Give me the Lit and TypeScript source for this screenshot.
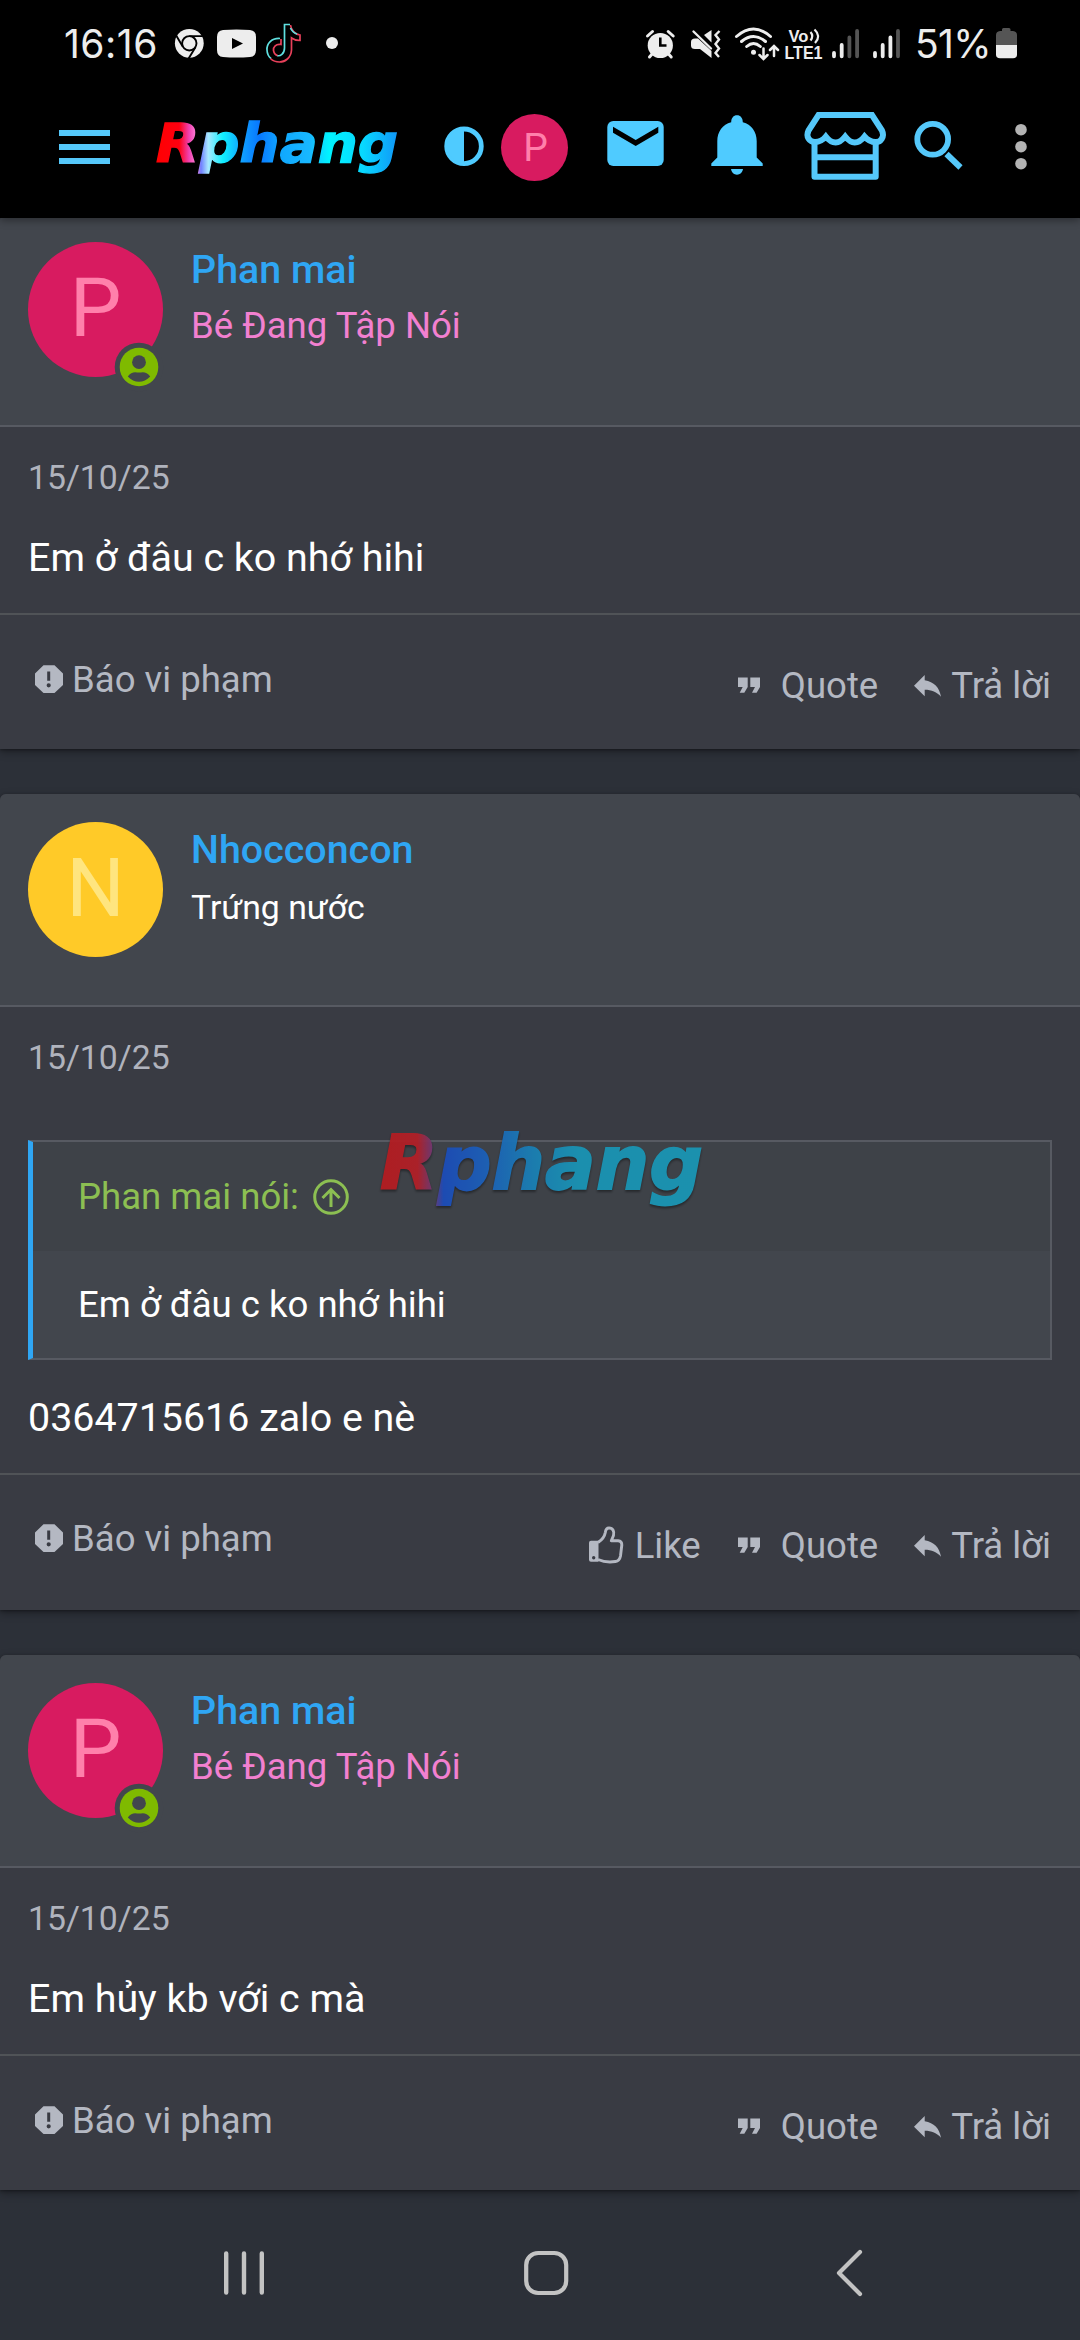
import { LitElement, html, svg, css, nothing } from "lit";
import { customElement, property } from "lit/decorators.js";

interface Post {
  name: string;
  initial: string;
  tone: "pink" | "amber";
  title: string;
  titleTone: "rose" | "plain";
  online: boolean;
  date: string;
  quote?: { author: string; text: string };
  text: string;
  likable: boolean;
}

const POSTS: Post[] = [
  { name: "Phan mai", initial: "P", tone: "pink", title: "Bé Đang Tập Nói", titleTone: "rose", online: true, date: "15/10/25", text: "Em ở đâu c ko nhớ hihi", likable: false },
  { name: "Nhocconcon", initial: "N", tone: "amber", title: "Trứng nước", titleTone: "plain", online: false, date: "15/10/25", quote: { author: "Phan mai nói:", text: "Em ở đâu c ko nhớ hihi" }, text: "0364715616 zalo e nè", likable: true },
  { name: "Phan mai", initial: "P", tone: "pink", title: "Bé Đang Tập Nói", titleTone: "rose", online: true, date: "15/10/25", text: "Em hủy kb với c mà", likable: false },
];

@customElement("status-bar")
class StatusBar extends LitElement {
  static styles = css`
    :host { display: flex; height: 88px; color: #ededed; background: #000; }
    svg { display: block; flex: none; }
    .time, .pct { font-family: Inter, "Noto Sans", sans-serif; font-size: 39px; line-height: 88px; white-space: nowrap; }
    .time { width: 110px; padding-left: 64px; letter-spacing: 0.5px; }
    .pct { width: 76px; letter-spacing: -0.6px; }
    .space { flex: 1; }
    .net { font-family: "Liberation Sans", sans-serif; font-weight: 700; fill: #ededed; }
  `;
  render() {
    // Every glyph's viewBox keeps the bar's own coordinates, so the tiles sit edge to edge.
    return html`
      <span class="time">16:16</span>
      <svg width="36" height="88" viewBox="174 0 36 88">
        <circle cx="189.3" cy="43.3" r="14.4" fill="#ededed"/>
        <g fill="none" stroke="#000" stroke-width="1.9">
          <circle cx="189.3" cy="43.3" r="7.2"/>
          <path d="M189.3 36.1H202.5M183 46.9L176.2 35.6M195.6 46.9L188.6 58.5"/>
        </g>
      </svg>
      <svg width="54" height="88" viewBox="210 0 54 88">
        <path fill="#ededed" d="M223 30Q236.500 29 250 30Q256 30.500 256 37V50Q256 56.500 250 57Q236.500 58 223 57Q217 56.500 217 50V37Q217 30.500 223 30Z"/>
        <path fill="#000" d="M232 38L243 43.500L232 49Z"/>
      </svg>
      <svg width="50" height="88" viewBox="264 0 50 88">
        <g fill="none" stroke-width="1.7">
          <path stroke="#5fe0e0" d="M284.500 48V24.500H290M284.500 48C284.500 54 280 56.500 277 55.500M280 38.500C271 38 266.500 44 267 50C267.200 54 269 57 271 58.500"/>
          <path stroke="#e8405a" d="M290.500 25C291 30 295 34.500 300 35V40.500C296.500 40.500 293.500 39.500 291.500 38V50C291 58 285 62 279.500 62C276 62 273 61 270.500 58.500M281 39V44.500C276 43.500 273 47 273.500 50.500C274 53 275.500 55 277.500 55.500"/>
          <path stroke="#5fe0e0" d="M290.500 28C292 31.500 294 33 297 34"/>
        </g>
      </svg>
      <svg width="40" height="88" viewBox="314 0 40 88"><circle cx="332" cy="43" r="6" fill="#ededed"/></svg>
      <span class="space"></span>
      <svg width="44" height="88" viewBox="640 0 44 88">
        <circle cx="660.3" cy="45.500" r="12.600" fill="#ededed"/>
        <path d="M647.500 36L652.500 31.500M673.200 36L668.200 31.500M649.500 57L653 53M671.200 57L667.700 53" stroke="#ededed" stroke-width="3" stroke-linecap="round"/>
        <path d="M660.3 37.500V45.500H666.500" fill="none" stroke="#000" stroke-width="2.600"/>
      </svg>
      <svg width="46" height="88" viewBox="684 0 46 88">
        <path fill="#ededed" d="M695 38.500H698L711.500 51V58L700 49H695Q691 49 691 45.500V42Q691 38.500 695 38.500ZM704 35L711.500 30V42.500Z"/>
        <path d="M693.500 31.500L711 48.500" stroke="#ededed" stroke-width="2.400" stroke-linecap="round"/>
        <path d="M719.500 31L715.500 35L719 39.500L715.500 44L719 48.500L715.500 53L719 57" fill="none" stroke="#ededed" stroke-width="2.400"/>
      </svg>
      <svg width="54" height="88" viewBox="730 0 54 88">
        <g fill="none" stroke="#ededed" stroke-width="3" stroke-linecap="round">
          <path d="M736.500 36.500Q753.500 21.500 770.500 36.500M741.500 41.500Q753.500 31.500 765.500 41.500M746.700 46.500Q753.500 40.500 760.300 46.500"/>
          <path d="M763.500 48.500V58.500M759.500 55L763.500 59L767.500 55M774 56V46.500M770 50L774 46L778 50" stroke-width="2.500"/>
        </g>
        <circle cx="753.500" cy="52.300" r="2.500" fill="#ededed"/>
      </svg>
      <svg width="44" height="88" viewBox="784 0 44 88">
        <text class="net" x="788.500" y="41.500" font-size="16" textLength="20" lengthAdjust="spacingAndGlyphs">Vo</text>
        <path d="M810.500 32Q814 36 810.500 40.500M814.500 29.500Q821.500 36 815 43" fill="none" stroke="#ededed" stroke-width="2.200"/>
        <text class="net" x="784.500" y="59" font-size="17.500" textLength="38" lengthAdjust="spacingAndGlyphs">LTE1</text>
      </svg>
      <svg width="87" height="88" viewBox="828 0 87 88">
        <g stroke="#ededed" stroke-width="3.800" stroke-linecap="round">
          <path d="M834 53V56.300M841.700 45V56.300M875 53V56.300M882.700 45V56.300M890.400 37.500V56.300"/>
          <path stroke="#555" d="M849.400 37.500V56.300M857.100 31V56.300M898 31V56.300"/>
        </g>
      </svg>
      <span class="pct">51%</span>
      <svg width="89" height="88" viewBox="991 0 89 88">
        <path fill="#555" d="M1002 29.500Q1002 28 1003.500 28H1009Q1010.500 28 1010.500 29.500V31H1013Q1017 31.500 1017 35V46H996V35Q996 31.500 1000 31H1002Z"/>
        <path fill="#ededed" d="M996 45H1017V54.500Q1017 58.300 1013 58.300H1000Q996 58.300 996 54.500Z"/>
      </svg>`;
  }
}

@customElement("app-bar")
class AppBar extends LitElement {
  static styles = css`
    :host { display: flex; height: 130px; background: #000; }
    svg { display: block; flex: none; }
    .brand { font-family: "DejaVu Sans", sans-serif; font-weight: 700; font-style: italic; font-size: 54px; }
    .initial { font-family: Roboto, sans-serif; font-size: 39px; fill: #ff80ab; text-anchor: middle; }
  `;
  render() {
    return html`
      <svg width="140" height="130" viewBox="0 88 140 130"><path fill="#55c8fa" d="M59 130h51v6h-51zM59 144h51v6h-51zM59 158h51v6h-51z"/></svg>
      <svg width="290" height="130" viewBox="140 88 290 130">
        <defs>
          <linearGradient id="brand" gradientUnits="userSpaceOnUse" x1="155" y1="0" x2="397" y2="0">
            <stop offset="0" stop-color="#f00"/><stop offset=".1" stop-color="#ff0010"/><stop offset=".14" stop-color="#f040b0"/>
            <stop offset=".17" stop-color="#ff80d8"/><stop offset=".19" stop-color="#7080ff"/><stop offset=".22" stop-color="#a8e8ff"/><stop offset=".28" stop-color="#10f0ff"/>
            <stop offset=".36" stop-color="#10a0ff"/><stop offset=".43" stop-color="#0878ff"/><stop offset=".52" stop-color="#10a8ff"/>
            <stop offset=".64" stop-color="#18b8ff"/><stop offset=".72" stop-color="#00f4ff"/><stop offset=".86" stop-color="#08d8ff"/><stop offset="1" stop-color="#1098f8"/>
          </linearGradient>
        </defs>
        <text class="brand" x="156" y="162" fill="url(#brand)" stroke="url(#brand)" stroke-width="1.400" textLength="242" lengthAdjust="spacingAndGlyphs">Rphang</text>
      </svg>
      <svg width="65" height="130" viewBox="430 88 65 130">
        <circle cx="464" cy="146.300" r="17.300" fill="none" stroke="#4fcbff" stroke-width="4.800"/>
        <path fill="#4fcbff" d="M464 129.500V163A16.700 16.700 0 0 1 464 129.500Z"/>
      </svg>
      <svg width="95" height="130" viewBox="495 88 95 130">
        <circle cx="534.500" cy="147.500" r="33.500" fill="#d81b60"/>
        <text class="initial" x="535.500" y="161">P</text>
      </svg>
      <svg width="100" height="130" viewBox="590 88 100 130">
        <rect x="607.300" y="121" width="56.400" height="45" rx="6" fill="#4fcbff"/>
        <path fill="#000" d="M613 126.700L635.700 140L658.300 126.700V132.700L635.700 146L613 132.700Z"/>
      </svg>
      <svg width="100" height="130" viewBox="690 88 100 130">
        <path fill="#4fcbff" d="M737 115.300C740.500 115.300 742.800 118 742.800 122.300C751.500 124.500 756.700 132 756.700 141V157.500L762.700 163.500V166H711.300V163.500L717.300 157.500V141C717.300 132 722.500 124.500 731.200 122.300C731.200 118 733.500 115.300 737 115.300ZM731 169H743C742.500 172.500 740 174.700 737 174.700C734 174.700 731.500 172.500 731 169Z"/>
      </svg>
      <svg width="110" height="130" viewBox="790 88 110 130">
        <g fill="none" stroke="#55c8fa" stroke-width="6" stroke-linejoin="round">
          <path d="M818.500 115H872L882 130.500C885 137 880.500 142.300 875.500 142C871 142 867.500 140 864.500 136.500C861.500 140.500 858 142.500 854.700 142.500C851 142.500 848 140 845.200 136.500C842 140.500 839 142.500 835.700 142.500C832 142.500 828.500 140 825.800 136.500C823 140 819.500 142 815 142C809.500 142 805.500 137 808.500 130.500Z" stroke-linejoin="miter"/>
          <path d="M814.500 142V176.700H875.700V142M814.500 157.300H875.700"/>
        </g>
      </svg>
      <svg width="80" height="130" viewBox="900 88 80 130">
        <circle cx="932.700" cy="139.300" r="15.400" fill="none" stroke="#55c8fa" stroke-width="5.800"/>
        <path d="M946.500 154L960.500 167.500" stroke="#55c8fa" stroke-width="6"/>
      </svg>
      <svg width="100" height="130" viewBox="980 88 100 130">
        <g fill="#b3b3b3"><circle cx="1021" cy="129.700" r="5.800"/><circle cx="1021" cy="146.700" r="5.800"/><circle cx="1021" cy="163.700" r="5.800"/></g>
      </svg>`;
  }
}

const reportIcon = svg`<path fill="currentColor" fill-rule="evenodd" d="M8.500 12.300H19.500L28 20.500V32L19.500 40H8.500L0 32V20.500ZM12.200 18.500V27.800H15.200V18.500ZM13.700 30.200A2.100 2.100 0 1 0 13.700 34.400A2.100 2.100 0 1 0 13.700 30.200Z"/>`;
const quoteIcon = svg`<path fill="currentColor" d="M0 18.500H9.700V28L6.300 33.800H1.700L4.700 28H0ZM12.300 18.500H22V28L18.600 33.800H14L17 28H12.300Z"/>`;
const replyIcon = svg`<path fill="currentColor" d="M0 26.800L10.700 16V21.300C20 22.800 25.500 28.500 27 37.800C23 33 17.500 30.800 10.700 30.800V37.300Z"/>`;
const likeIcon = svg`<path fill="currentColor" fill-rule="evenodd" d="M2 21.800H9.500V42.800H2Q0 42.800 0 40.800V23.800Q0 21.800 2 21.800ZM4.700 37A1.700 1.700 0 1 0 4.700 40.400A1.700 1.700 0 1 0 4.700 37Z"/>
  <path fill="none" stroke="currentColor" stroke-width="2.900" stroke-linejoin="round" d="M9 23.500C13 21 15.500 18 16.300 13.500C16.800 9.500 18.500 9 20 9C24 9 25.500 12.500 24.500 16.500L22.300 21.700H29Q33 22 32.800 26L31.500 37Q30.500 42 26.500 42.500Q17 44 9 40.500"/>`;

@customElement("forum-post")
class ForumPost extends LitElement {
  @property({ attribute: false }) post!: Post;

  static styles = css`
    :host { display: block; border-radius: 6px 6px 0 0; background: #393b43; box-shadow: 0 3px 8px rgba(0, 0, 0, 0.35), 0 1px 3px rgba(0, 0, 0, 0.3); }
    svg { display: block; flex: none; }
    .head { box-sizing: border-box; height: 213px; padding: 28px; display: flex; gap: 28px; background: #42464d; border-bottom: 2px solid #575a62; border-radius: 6px 6px 0 0; }
    .avatar { position: relative; width: 135px; height: 135px; border-radius: 50%; font-size: 82px; line-height: 133px; text-align: center; }
    .pink { background: #d81b60; color: #ff80ab; }
    .amber { background: #ffca28; color: #ffe57f; }
    .badge { position: absolute; right: -1px; bottom: -15px; }
    .who { display: flex; flex-direction: column; }
    .name { color: #2fa6f4; font-size: 39.400px; font-weight: 500; line-height: 56px; }
    .rose { color: #f280d0; font-size: 36.560px; line-height: 56px; }
    .plain { color: #fff; font-size: 33.750px; line-height: 60px; }
    .body { padding: 28px 28px 27px; }
    .date { color: #b0b3bd; font-size: 33.750px; line-height: 45px; }
    .text { margin-top: 30px; color: #fff; font-size: 39.400px; line-height: 56px; }
    .quote { margin: 60px 0 30px; border: 2px solid #575a62; border-left: 5px solid #2fa6f4; background: #42464d; }
    .quote + .text { margin-top: 0; }
    .qhead { position: relative; display: flex; align-items: center; gap: 14px; height: 109px; padding-left: 45px; background: #3e4248; color: #8cbf52; font-size: 36.560px; }
    .qtext { padding-left: 45px; color: #fff; font-size: 36.560px; line-height: 107px; }
    .watermark { position: absolute; left: 337px; top: -22px; opacity: 0.95; filter: drop-shadow(0 2px 1px rgba(0, 0, 0, 0.4)); }
    .brand { font-family: "DejaVu Sans", sans-serif; font-weight: 700; font-style: italic; font-size: 75px; }
    .foot { box-sizing: border-box; height: 136px; padding: 38px 29px 0 35px; display: flex; justify-content: space-between; border-top: 2px solid #505357; color: #b4b8c2; font-size: 36.560px; line-height: 54px; }
    .tall { height: 137px; padding-top: 37px; }
    .report { display: flex; gap: 9px; }
    .actions { display: flex; padding-top: 6px; }
    .tall .actions { padding-top: 7px; }
    .action { display: flex; }
    .like { gap: 11px; margin-right: 37px; }
    .quoting { gap: 21px; margin-right: 36px; }
    .reply { gap: 10px; }
  `;

  render() {
    const p = this.post;
    return html`
      <div class="head">
        <div class="avatar ${p.tone}">${p.initial}
          ${p.online ? html`<svg class="badge" width="50" height="50" viewBox="-25 -25 50 50">
            <circle r="24.300" fill="#42464d"/><circle r="19.300" fill="#7fba00"/>
            <circle cy="-4.800" r="6.900" fill="#42464d"/>
            <path fill="#42464d" d="M-11.200 9.500C-8 4.500 -4 4.800 0 5.600C4 4.800 8 4.500 11.200 9.500C8 13 4 14.800 0 14.800C-4 14.800 -8 13 -11.200 9.500Z"/>
          </svg>` : nothing}
        </div>
        <div class="who"><span class="name">${p.name}</span><span class=${p.titleTone}>${p.title}</span></div>
      </div>
      <div class="body">
        <div class="date">${p.date}</div>
        ${p.quote ? html`<div class="quote">
          <div class="qhead">
            <span>${p.quote.author}</span>
            <svg width="36" height="36" viewBox="-18 -18 36 36" fill="none" stroke="currentColor" stroke-width="3">
              <circle r="16.300"/><path d="M0 10V-7.500M-8.500 1L0 -7.500L8.500 1"/>
            </svg>
            <svg class="watermark" width="350" height="100" viewBox="370 1120 350 100">
              <defs><linearGradient id="wm" gradientUnits="userSpaceOnUse" x1="379" y1="0" x2="701" y2="0">
                <stop offset="0" stop-color="#b41c20"/><stop offset=".12" stop-color="#b02028"/><stop offset=".17" stop-color="#6a3a78"/>
                <stop offset=".2" stop-color="#1c4cb8"/><stop offset=".33" stop-color="#1c60b8"/><stop offset=".48" stop-color="#1a80b4"/>
                <stop offset=".62" stop-color="#1a94b4"/><stop offset="1" stop-color="#1a96b4"/>
              </linearGradient></defs>
              <text class="brand" x="380" y="1189" fill="url(#wm)" stroke="url(#wm)" stroke-width="1.800" textLength="323" lengthAdjust="spacingAndGlyphs">Rphang</text>
            </svg>
          </div>
          <div class="qtext">${p.quote.text}</div>
        </div>` : nothing}
        <div class="text">${p.text}</div>
      </div>
      <div class="foot ${p.quote ? "tall" : ""}">
        <div class="report"><svg width="28" height="54" viewBox="0 0 28 54">${reportIcon}</svg><span>Báo vi phạm</span></div>
        <div class="actions">
          ${p.likable ? html`<div class="action like"><svg width="35" height="54" viewBox="0 0 35 54">${likeIcon}</svg><span>Like</span></div>` : nothing}
          <div class="action quoting"><svg width="22" height="54" viewBox="0 0 22 54">${quoteIcon}</svg><span>Quote</span></div>
          <div class="action reply"><svg width="27" height="54" viewBox="0 0 27 54">${replyIcon}</svg><span>Trả lời</span></div>
        </div>
      </div>`;
  }
}

@customElement("app-root")
class AppRoot extends LitElement {
  static styles = css`
    :host { display: flex; flex-direction: column; height: 2340px; overflow: hidden; background: #2c3038; font-family: Roboto, "Noto Sans", sans-serif; }
    header { position: relative; z-index: 1; box-shadow: 0 2px 8px rgba(0, 0, 0, 0.4); }
    main { display: flex; flex-direction: column; gap: 45px; margin-top: -4px; }
    nav { display: flex; height: 150px; }
    nav svg { display: block; }
  `;
  render() {
    return html`
      <header><status-bar></status-bar><app-bar></app-bar></header>
      <main>${POSTS.map((p) => html`<forum-post .post=${p}></forum-post>`)}</main>
      <nav>
        <svg width="360" height="150" viewBox="0 2190 360 150"><path d="M226.200 2253.500V2292.500M244 2253.500V2292.500M261.800 2253.500V2292.500" stroke="#c3c3c3" stroke-width="4.400" stroke-linecap="round"/></svg>
        <svg width="360" height="150" viewBox="360 2190 360 150"><rect x="526.200" y="2253" width="40" height="40" rx="12" fill="none" stroke="#c3c3c3" stroke-width="4.200"/></svg>
        <svg width="360" height="150" viewBox="720 2190 360 150"><path d="M860 2252L839 2273L860 2294" fill="none" stroke="#c3c3c3" stroke-width="4.200" stroke-linecap="round" stroke-linejoin="round"/></svg>
      </nav>`;
  }
}
